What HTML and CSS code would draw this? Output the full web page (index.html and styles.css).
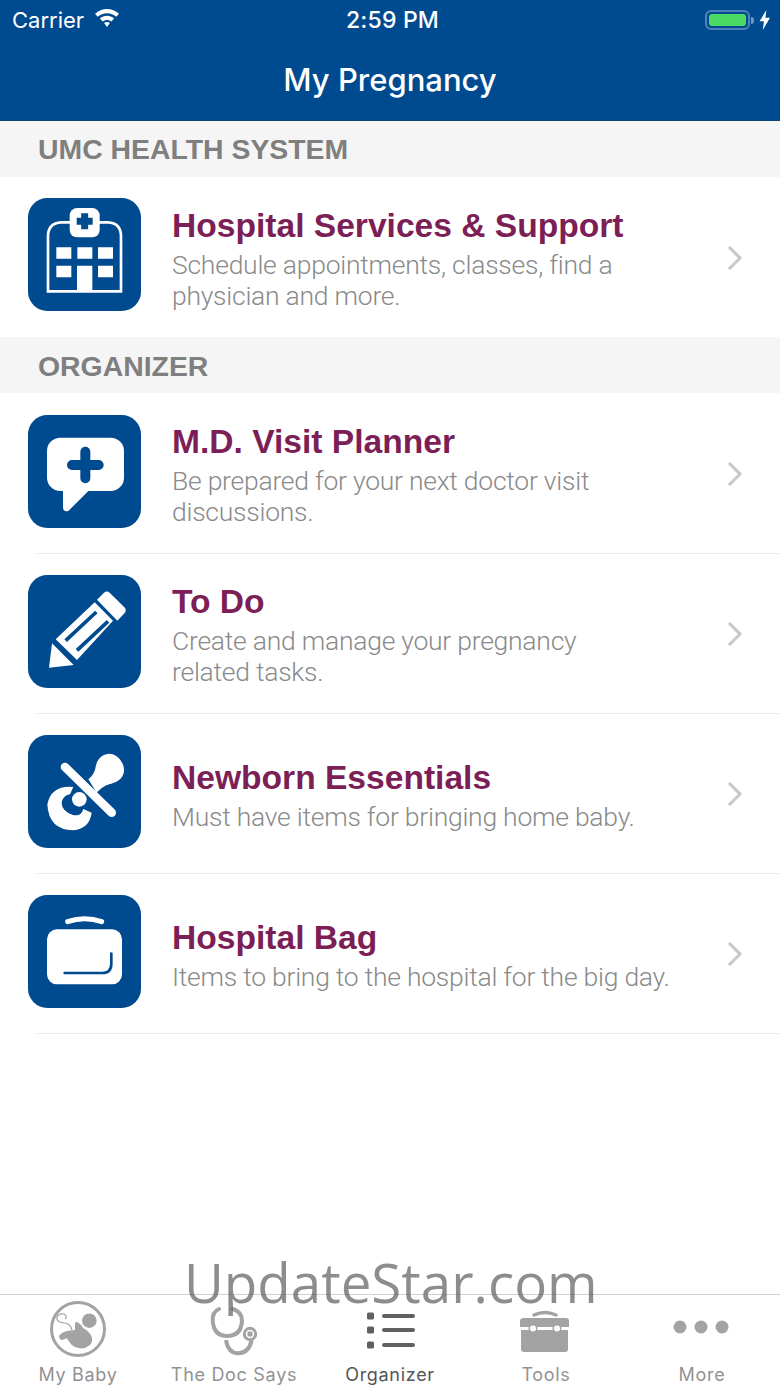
FILE: index.html
```html
<!DOCTYPE html>
<html lang="en">
<head>
<meta charset="utf-8">
<title>My Pregnancy</title>
<link rel="stylesheet" href="styles.css">
</head>
<body>
<div class="app">
  <header class="top">
    <div class="status">
      <div class="status-left">
        <span>Carrier</span>
        <svg class="wifi" viewBox="0 0 26 20"><path d="M13 1C8.600 1 4.400 2.700 1 5.800l2.800 3C6.300 6.500 9.500 5.200 13 5.200s6.700 1.300 9.200 3.600l2.800-3C21.600 2.700 17.400 1 13 1z"/><path d="M13 7.800c-2.600 0-5.100 1-7.100 2.800l2.800 3c1.200-1.100 2.700-1.700 4.300-1.700s3.100.6 4.300 1.700l2.800-3C18.100 8.800 15.600 7.800 13 7.800z"/><path d="M13 14c-1.100 0-2.100.4-2.900 1.100L13 19l2.900-3.900c-.8-.7-1.800-1.100-2.900-1.100z"/></svg>
      </div>
      <div class="status-time">2:59 PM</div>
      <div class="status-right">
        <span class="battery"><span class="battery-level"></span></span>
        <span class="battery-cap"></span>
        <svg class="bolt" viewBox="0 0 12 22"><path d="M7.500 0 0 12.500h4.800L3.600 22 11.500 8.500H6.500z"/></svg>
      </div>
    </div>
    <h1 class="nav-title">My Pregnancy</h1>
  </header>

  <main class="content">
    <h2 class="section">UMC HEALTH SYSTEM</h2>
    <a class="row row-first row-solo">
      <svg class="tile" viewBox="0 0 339 339">
        <rect width="339" height="339" rx="58" class="tile-bg"/>
        <path d="M60 280V115Q60 75 100 73H240Q279 75 279 115V280Z" class="ln" stroke-width="8"/>
        <rect x="125" y="30" width="90" height="88" rx="22" class="wh"/>
        <path d="M170 46V94M146 70H194" class="bl" stroke-width="21"/>
        <path d="M85 148h45v34H85zM148 148h45v34h-45zM210 148h45v34h-45zM85 203h45v35H85zM210 203h45v35h-45zM147 203h46v78h-46z" class="wh"/>
      </svg>
      <div class="text">
        <div class="title">Hospital Services &amp; Support</div>
        <div class="desc">Schedule appointments, classes, find a<br>physician and more.</div>
      </div>
      <svg class="chevron" viewBox="0 0 16 26"><path d="M2 2l11 11L2 24"/></svg>
    </a>

    <h2 class="section section-next">ORGANIZER</h2>
    <a class="row">
      <svg class="tile" viewBox="0 0 339 339">
        <rect width="339" height="339" rx="58" class="tile-bg"/>
        <rect x="57" y="68" width="231" height="160" rx="40" class="wh"/>
        <path d="M105 220V278Q107 292 121 288L185 224Z" class="wh"/>
        <path d="M172 110V190M132 150H212" class="bl" stroke-width="30" stroke-linecap="round"/>
      </svg>
      <div class="text">
        <div class="title">M.D. Visit Planner</div>
        <div class="desc">Be prepared for your next doctor visit<br>discussions.</div>
      </div>
      <svg class="chevron" viewBox="0 0 16 26"><path d="M2 2l11 11L2 24"/></svg>
    </a>
    <a class="row">
      <svg class="tile" viewBox="0 0 339 339">
        <rect width="339" height="339" rx="58" class="tile-bg"/>
        <path d="M63 278 72 205 137 270Z" class="wh"/>
        <path d="M83 193 200 82 255 137 147 255Z" class="wh"/>
        <path d="M113 197 205 111M147 226 240 139" class="bl" stroke-width="11"/>
        <path d="M207 74 228 53Q236 46 245 53L289 97Q297 105 290 114L268 137Z" class="wh"/>
      </svg>
      <div class="text">
        <div class="title">To Do</div>
        <div class="desc">Create and manage your pregnancy<br>related tasks.</div>
      </div>
      <svg class="chevron" viewBox="0 0 16 26"><path d="M2 2l11 11L2 24"/></svg>
    </a>
    <a class="row">
      <svg class="tile" viewBox="0 0 339 339">
        <rect width="339" height="339" rx="58" class="tile-bg"/>
        <path d="M136 156Q70 150 58 208Q62 285 136 286Q185 280 191 233L166 222Q160 245 135 240Q102 230 101 205Q103 182 126 178Z" class="wh"/>
        <path d="M111 96 251 233" class="ln" stroke-width="26" stroke-linecap="round"/>
        <circle cx="154" cy="193" r="22" class="wh"/>
        <path d="M181 133C195 120 200 112 203 95C207 70 225 56 245 56C270 58 290 85 288 108C286 128 272 140 250 146C232 150 220 158 206 173Z" class="wh"/>
      </svg>
      <div class="text">
        <div class="title">Newborn Essentials</div>
        <div class="desc">Must have items for bringing home baby.</div>
      </div>
      <svg class="chevron" viewBox="0 0 16 26"><path d="M2 2l11 11L2 24"/></svg>
    </a>
    <a class="row">
      <svg class="tile" viewBox="0 0 339 339">
        <rect width="339" height="339" rx="58" class="tile-bg"/>
        <rect x="57" y="103" width="225" height="165" rx="30" class="wh"/>
        <path d="M119 80Q170 62 221 80" class="ln" stroke-width="15" stroke-linecap="round"/>
        <path d="M110 234H222Q250 234 250 206V176" class="bl-line" stroke-width="8" stroke-linecap="round"/>
      </svg>
      <div class="text">
        <div class="title">Hospital Bag</div>
        <div class="desc">Items to bring to the hospital for the big day.</div>
      </div>
      <svg class="chevron" viewBox="0 0 16 26"><path d="M2 2l11 11L2 24"/></svg>
    </a>
  </main>

  <nav class="tabs">
    <div class="tab">
      <svg class="tab-icon" viewBox="0 0 60 60">
        <circle cx="30" cy="28" r="26.500" class="tab-ln" stroke-width="3"/>
        <circle cx="41.300" cy="19.700" r="7.300" class="tab-fill"/>
        <path d="M11 34.700Q14 31 18.700 30L27 29Q27 25 27 22.300L28.700 20.700Q33 23 35.300 27.300Q41 30 43.700 35.700Q45 41 42 44Q37 48 32 47.300Q27 47 23.700 44L18.700 37.300Q15 39 13.700 39Q11 38 11 34.700Z" class="tab-fill"/>
        <path d="M24 29Q22 22 16 22Q8 21 9 16Q11 12 16 13Q20 15 17 18" class="tab-ln" stroke-width="1.200"/>
      </svg>
      <span class="tab-label">My Baby</span>
    </div>
    <div class="tab">
      <svg class="tab-icon" viewBox="0 0 60 60">
        <path d="M15 8Q8 11 8.700 20Q10 35 23 35Q37 35 38 20Q38 11 29 8" class="tab-ln" stroke-width="4" stroke-linecap="round"/>
        <path d="M22 39Q24 52.300 34.300 52.300Q45 52 47.700 39" class="tab-ln" stroke-width="4"/>
        <circle cx="46" cy="33" r="5.700" class="tab-ring" stroke-width="3"/>
        <circle cx="46" cy="33" r="2.700" class="tab-fill"/>
      </svg>
      <span class="tab-label">The Doc Says</span>
    </div>
    <div class="tab tab-active">
      <svg class="tab-icon" viewBox="0 0 60 60">
        <rect x="7" y="11.500" width="7" height="7" rx="1.500" class="tab-fill-dark"/>
        <rect x="7" y="25.500" width="7" height="7" rx="1.500" class="tab-fill-dark"/>
        <rect x="7" y="40.500" width="7" height="7" rx="1.500" class="tab-fill-dark"/>
        <path d="M24 15H53M24 29H53M24 44H53" class="tab-ln-dark" stroke-width="4" stroke-linecap="round"/>
      </svg>
      <span class="tab-label">Organizer</span>
    </div>
    <div class="tab">
      <svg class="tab-icon" viewBox="0 0 60 60">
        <path d="M18 14Q29 9 40 14" class="tab-ln" stroke-width="3.500" stroke-linecap="round"/>
        <path d="M8 17H50Q53 17 53 20V26H4V20Q4 17 8 17ZM5 29H52V48Q52 51 49 51H8Q5 51 5 48Z" class="tab-fill"/>
        <circle cx="17" cy="27.500" r="3.800" class="tab-ring" stroke-width="1.500"/>
        <circle cx="41" cy="27.500" r="3.800" class="tab-ring" stroke-width="1.500"/>
      </svg>
      <span class="tab-label">Tools</span>
    </div>
    <div class="tab">
      <svg class="tab-icon" viewBox="0 0 60 60">
        <circle cx="8" cy="26" r="6.500" class="tab-fill"/>
        <circle cx="29" cy="26" r="6.500" class="tab-fill"/>
        <circle cx="50" cy="26" r="6.500" class="tab-fill"/>
      </svg>
      <span class="tab-label">More</span>
    </div>
  </nav>

  <div class="watermark">UpdateStar.com</div>
</div>
</body>
</html>
```
FILE: styles.css
```css
* { box-sizing: border-box; }

html, body {
  margin: 0;
  padding: 0;
  background: #fff;
}

.app {
  position: relative;
  width: 780px;
  height: 1387px;
  display: flex;
  flex-direction: column;
  overflow: hidden;
  font-family: "Liberation Sans", Arial, sans-serif;
}

/* Status bar and navigation bar */
.top {
  height: 121px;
  background: #004a8f;
  color: #fff;
  border-bottom: 1px solid #0d4478;
  font-family: Inter, "Liberation Sans", sans-serif;
}

.status {
  height: 40px;
  padding: 0 9px 0 12px;
  display: grid;
  grid-template-columns: 1fr auto 1fr;
  align-items: center;
  font-size: 22px;
}

.status-left {
  display: flex;
  align-items: center;
  gap: 10px;
}

.wifi {
  width: 26px;
  height: 20px;
  fill: #fff;
  margin-top: -4px;
}

.status-time {
  margin-left: 2px;
  font-size: 23px;
  font-weight: 500;
  letter-spacing: .2px;
}

.status-right {
  display: flex;
  align-items: center;
  justify-content: flex-end;
}

.battery {
  width: 45px;
  height: 20px;
  padding: 2px;
  border: 2px solid #4f82b8;
  border-radius: 6px;
  display: block;
}

.battery-level {
  display: block;
  height: 100%;
  background: #4cd964;
  border-radius: 3px;
}

.battery-cap {
  width: 3px;
  height: 7px;
  margin-left: 1px;
  background: #6f9ac6;
  border-radius: 0 3px 3px 0;
}

.bolt {
  width: 12px;
  height: 20px;
  margin-left: 5px;
  fill: #fff;
}

.nav-title {
  margin: 0;
  height: 80px;
  padding-bottom: 2px;
  display: flex;
  align-items: center;
  justify-content: center;
  font-size: 31px;
  font-weight: 500;
}

/* Grouped list */
.content {
  flex: 1;
}

.section {
  margin: 0;
  height: 56px;
  padding-left: 38px;
  display: flex;
  align-items: center;
  background: #f5f5f5;
  color: #7f7f7f;
  font-size: 28.400px;
  font-weight: 700;
}

.section-next { padding-top: 2px; }

.row {
  position: relative;
  height: 160px;
  display: flex;
  align-items: flex-start;
  padding: 22px 28px 0;
  color: inherit;
}

.row::after {
  content: "";
  position: absolute;
  left: 37px;
  right: 0;
  bottom: -1px;
  height: 1px;
  background: #e9e9e9;
}

.row-first { padding-top: 21px; }
.row-solo::after { display: none; }

.tile {
  width: 113px;
  height: 113px;
  flex: none;
}

.tile-bg { fill: #004a8f; }
.wh { fill: #fff; }
.ln { fill: none; stroke: #fff; }
.bl { stroke: #004a8f; fill: #004a8f; }
.bl-line { stroke: #004a8f; fill: none; }

.text {
  width: 520px;
  margin-left: 31px;
  align-self: stretch;
  display: flex;
  flex-direction: column;
  justify-content: center;
  padding-bottom: 19px;
}

.title {
  color: #7c1f57;
  font-size: 33.600px;
  line-height: 40px;
  font-weight: 700;
}

.desc {
  margin-top: 3px;
  color: #8a8a8a;
  font-family: Roboto, "Liberation Sans", sans-serif;
  font-weight: 300;
  font-size: 26.500px;
  letter-spacing: -.25px;
  line-height: 31px;
}

.chevron {
  position: absolute;
  right: 37px;
  top: 68px;
  width: 16px;
  height: 26px;
  fill: none;
  stroke: #c7c7cc;
  stroke-width: 3;
}

/* Tab bar */
.tabs {
  height: 93px;
  display: flex;
  border-top: 1px solid #d0d0d0;
  background: #fff;
  font-family: Inter, "Liberation Sans", sans-serif;
}

.tab {
  flex: 1;
  display: flex;
  flex-direction: column;
  align-items: center;
  padding-top: 6px;
  color: #929292;
}

.tab-icon {
  width: 60px;
  height: 60px;
  flex: none;
}

.tab-label {
  font-size: 18px;
  line-height: 24px;
  margin-top: 2px;
  letter-spacing: .7px;
}

.tab-active { color: #555; }

.tab-fill { fill: #a3a3a3; }
.tab-ln { fill: none; stroke: #a3a3a3; }
.tab-fill-dark { fill: #606060; }
.tab-ln-dark { fill: none; stroke: #606060; }
.tab-ring { fill: #fff; stroke: #a3a3a3; }

/* Overlay wordmark across the tab bar edge */
.watermark {
  position: absolute;
  left: 184px;
  top: 1244px;
  font-family: "Open Sans", sans-serif;
  font-size: 54.700px;
  line-height: 76px;
  color: rgba(80, 80, 80, .65);
  white-space: nowrap;
}
```
